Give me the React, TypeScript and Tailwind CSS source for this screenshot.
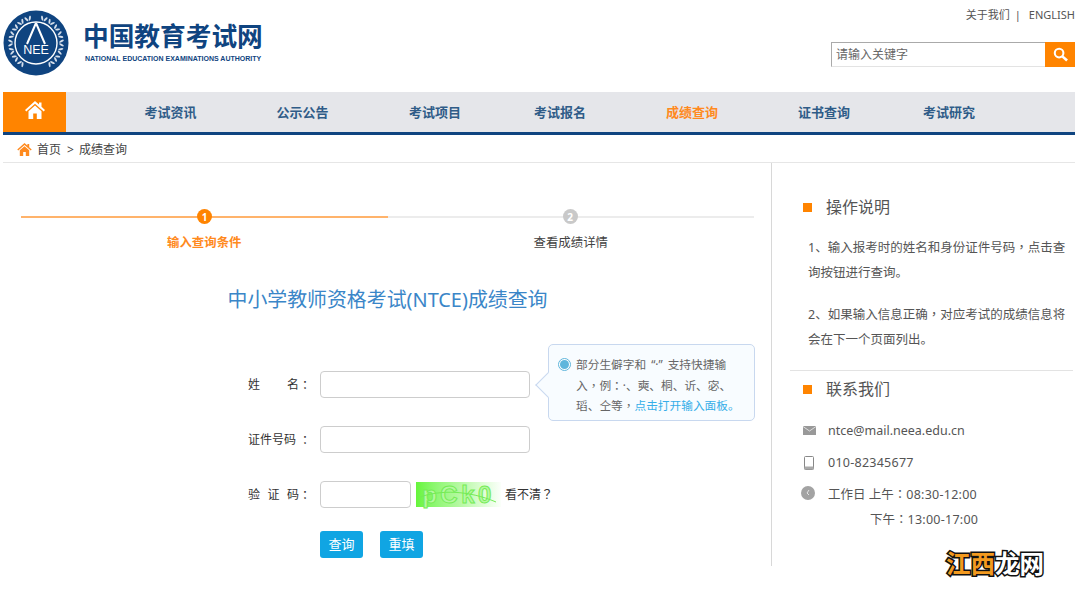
const cjk = "font-['Noto_Sans','Noto_Sans_CJK_SC',sans-serif]";

const navItems = [
  { label: "考试资讯", w: "w-[131px]" },
  { label: "公示公告", w: "w-[133px]" },
  { label: "考试项目", w: "w-[132px]" },
  { label: "考试报名", w: "w-[118px]" },
  { label: "成绩查询", w: "w-[146px]", active: true },
  { label: "证书查询", w: "w-[118px]" },
  { label: "考试研究", w: "w-[132px]" },
];

// 全角标点居中显示
const P = ({ children }: { children: string }) => (
  <span className="font-['Noto_Sans_CJK_TC',sans-serif] leading-[0]">{children}</span>
);

const HomeIcon = ({ className }: { className: string }) => (
  <svg viewBox="0 0 20 18" className={className} fill="currentColor">
    <path d="M10 0 L14 3.6 V1.5 H16.5 V5.8 L20 9 L18.7 10.4 L10 2.8 L1.3 10.4 L0 9 Z" />
    <path d="M3.5 10.2 L10 4.5 L16.5 10.2 V18 H11.8 V12.5 H8.2 V18 H3.5 Z" />
  </svg>
);

const leafAngles = [18, 36, 54, 72, 90, 108, 126, 144];

const Emblem = () => (
  <svg viewBox="0 0 66 66" className="h-[66px] w-[66px] shrink-0">
    <circle cx="33" cy="33" r="32.5" fill="#0f4480" />
    <circle cx="33" cy="33" r="21" fill="none" stroke="#fff" strokeWidth="1.4" />
    <path d="M33 13 L42 34 M33 13 L24 34" fill="none" stroke="#fff" strokeWidth="2" />
    <text x="33" y="44" textAnchor="middle" fontFamily="Liberation Sans" fontSize="12.5" fill="#fff">
      NEE
    </text>
    {[1, -1].map((side) =>
      leafAngles.map((a) => (
        <g key={`${side}-${a}`} transform={`rotate(${side * a} 33 33)`}>
          <ellipse cx={33 - 1.8 * side} cy="7.5" rx="1" ry="2.6" fill="#d5deea" transform={`rotate(${side * -28} ${33 - 1.8 * side} 7.5)`} />
          <ellipse cx={33 + 1.8 * side} cy="7.5" rx="1" ry="2.6" fill="#d5deea" transform={`rotate(${side * 28} ${33 + 1.8 * side} 7.5)`} />
        </g>
      )),
    )}
  </svg>
);

const SectionTitle = ({ children }: { children: string }) => (
  <div className="flex items-center">
    <span className="h-[9px] w-[9px] bg-[#ff8400]" />
    <span className="ml-[14px] text-[16px] leading-[24px] text-[#555]">{children}</span>
  </div>
);

const Step = ({ n, label, active }: { n: number; label: string; active?: boolean }) => (
  <div className="relative w-[366.5px]">
    <div className={active ? "h-[2px] bg-[#ffb36b]" : "h-[2px] bg-[#ececec]"} />
    <div
      className={`absolute top-[-7px] flex h-[15px] w-[15px] items-center justify-center rounded-full text-[10px] font-bold leading-none text-white ${
        active ? "left-[176px] bg-[#ff8400]" : "left-[175px] bg-[#c9c9c9]"
      }`}
    >
      {n}
    </div>
    <div
      className={`mt-[16px] text-center text-[12.4px] leading-[18px] ${
        active ? "font-bold text-[#ff8a1e]" : "text-[#444]"
      }`}
    >
      {label}
    </div>
  </div>
);

const Field = ({ label, wide = true }: { label: string; wide?: boolean }) => (
  <div className={`h-[27px] rounded-[4px] border-[1.5px] border-[#cdcdcd] bg-white ${wide ? "w-[210px]" : "w-[91px]"}`} aria-label={label} />
);

const Label = ({ parts, gap }: { parts: string[]; gap: string }) => (
  <div className={`ml-[227px] flex w-[72px] ${gap}`}>
    {parts.map((p) => (
      <span key={p}>{p}</span>
    ))}
  </div>
);

export default function App() {
  return (
    <div className={`relative h-[594px] w-[1080px] overflow-hidden bg-white px-[3px] ${cjk}`}>
      {/* header */}
      <div className="flex h-[92px] w-[1072px]">
        <div className="flex pt-[10px]">
          <Emblem />
          <div className="ml-[15px] pt-[11px]">
            <div className="ml-[-1px] text-[25.7px] font-bold leading-[32px] text-[#0f4480]">中国教育考试网</div>
            <div className="ml-[1px] mt-[1px] whitespace-nowrap font-['Liberation_Sans',sans-serif] text-[7px] font-bold leading-[9px] text-[#0f4480]">
              NATIONAL EDUCATION EXAMINATIONS AUTHORITY
            </div>
          </div>
        </div>
        <div className="ml-auto flex flex-col items-end">
          <div className="mt-[7px] flex items-center text-[11px] leading-[16px] text-[#555]">
            <span>关于我们</span>
            <span className="ml-[5px]">|</span>
            <span className="ml-[8px]">ENGLISH</span>
          </div>
          <div className="mt-[19px] flex h-[25px] w-[244px]">
            <div className="flex-1 border border-b-[#e3e3e3] border-l-[#aaa] border-r-0 border-t-[#aaa] pl-[4px] text-[12px] leading-[23px] text-[#666]">
              请输入关键字
            </div>
            <div className="flex w-[30px] items-center justify-center bg-[#ff8400]">
              <svg viewBox="0 0 16 16" className="h-[15px] w-[15px]" fill="none" stroke="#fff">
                <circle cx="6.5" cy="6.5" r="4.6" strokeWidth="2.2" />
                <path d="M10 10 L15 14.5" strokeWidth="2.8" />
              </svg>
            </div>
          </div>
        </div>
      </div>

      {/* nav */}
      <div className="flex h-[43px] w-[1072px] border-b-[3px] border-[#0f4480] bg-[#e5e6ea]">
        <div className="flex h-[40px] w-[63px] items-start justify-center bg-[#ff8400] pt-[9px] text-white">
          <HomeIcon className="h-[18px] w-[20px]" />
        </div>
        <div className="flex pl-[39px]">
          {navItems.map((item) => (
            <div
              key={item.label}
              className={`pt-[10px] text-center text-[13px] font-bold leading-[20px] ${item.w} ${
                item.active ? "text-[#ff8a1e]" : "text-[#2f5c88]"
              }`}
            >
              {item.label}
            </div>
          ))}
        </div>
      </div>

      {/* breadcrumb */}
      <div className="flex h-[28px] w-[1072px] items-center border-b border-[#e6e6e6] pl-[14px] pt-[2px] text-[12px] text-[#444]">
        <HomeIcon className="h-[13px] w-[15px] text-[#ff8a1e]" />
        <span className="ml-[5px]">首页</span>
        <span className="ml-[6px]">&gt;</span>
        <span className="ml-[5px]">成绩查询</span>
      </div>

      {/* main */}
      <div className="flex w-[1072px]">
        <div className="relative h-[403px] w-[769px] border-r border-[#d8d8d8] pl-[18px]">
          <div className="flex pt-[53px]">
            <Step n={1} label="输入查询条件" active />
            <Step n={2} label="查看成绩详情" />
          </div>
          <div className="mt-[33px] w-[733px] text-center text-[19.9px] leading-[30px] text-[#3a86c8]">
            中小学教师资格考试(NTCE)成绩查询
          </div>

          <div className="mt-[56px] flex flex-col gap-[28px] text-[12px] text-[#333]">
            <div className="flex items-center">
              <Label parts={["姓", "名"]} gap="gap-[27px]" />
              <span className="absolute left-[296px] font-['Noto_Sans_CJK_TC',sans-serif]">：</span>
              <Field label="姓名" />
            </div>
            <div className="flex items-center">
              <Label parts={["证件号码"]} gap="gap-0" />
              <span className="absolute left-[296px] font-['Noto_Sans_CJK_TC',sans-serif]">：</span>
              <Field label="证件号码" />
            </div>
            <div className="flex items-center">
              <Label parts={["验", "证", "码"]} gap="gap-[7.5px]" />
              <span className="absolute left-[296px] font-['Noto_Sans_CJK_TC',sans-serif]">：</span>
              <Field label="验证码" wide={false} />
              <div className="relative ml-[5px] flex h-[25px] w-[85px] items-center justify-center bg-gradient-to-r from-[#66f53a] via-[#b4f8a0] to-[#fbfffa] font-['Liberation_Sans',sans-serif] text-[24px] font-bold leading-none tracking-[3.5px] text-[#b4f8a0] [-webkit-text-stroke:1px_#74ec55]">
                pCk0
                <svg viewBox="0 0 85 25" className="absolute inset-0 h-[25px] w-[85px]" fill="none" stroke="#74ec55" strokeWidth="1">
                  <path d="M4 15 C24 8 52 8 80 20" />
                </svg>
              </div>
              <span className="ml-[4px]">看不清<P>？</P></span>
            </div>
          </div>

          <div className="ml-[299px] mt-[23px] flex gap-[17px]">
            <div className="flex h-[27px] w-[43px] items-center justify-center rounded-[3px] bg-[#10a5e3] text-[13px] text-white">查询</div>
            <div className="flex h-[27px] w-[43px] items-center justify-center rounded-[3px] bg-[#10a5e3] text-[13px] text-white">重填</div>
          </div>

          {/* input tip */}
          <div className="absolute left-[545px] top-[181px] h-[77px] w-[207px] rounded-[5px] border border-[#c8d8ef] bg-[#f8fcff] pl-[27px] pt-[9px] text-[11.7px] leading-[20.5px] text-[#666]">
            <span className="absolute left-[-10px] top-[31px] h-[18px] w-[18px] rotate-45 border-b border-l border-[#c8d8ef] bg-[#f8fcff]" />
            <span className="absolute left-[9px] top-[13px] flex h-[13px] w-[13px] items-center justify-center rounded-full border border-[#5fb6dc] bg-white">
              <span className="h-[9px] w-[9px] rounded-full bg-[#5fb6dc]" />
            </span>
            <div className="relative whitespace-nowrap">部分生僻字和<span className="mx-[5px]">“·”</span>支持快捷输</div>
            <div className="relative whitespace-nowrap">入<P>，</P>例<P>：</P>·、奭、桐、䜣、宓、</div>
            <div className="relative whitespace-nowrap">瑫、仝等<P>，</P><span className="text-[#35aee8]">点击打开输入面板。</span></div>
          </div>
        </div>

        {/* side panel */}
        <div className="flex-1 pt-[32px]">
          <div className="pl-[31px]">
            <SectionTitle>操作说明</SectionTitle>
          </div>
          <div className="mt-[16px] pl-[36px] pr-[4px] text-[12.5px] leading-[25px] text-[#555]">
            <p>1、输入报考时的姓名和身份证件号码<P>，</P>点击查询按钮进行查询。</p>
            <p className="mt-[17px]">2、如果输入信息正确<P>，</P>对应考试的成绩信息将会在下一个页面列出。</p>
          </div>
          <div className="ml-[18px] mt-[18px] w-[283px] border-t border-[#e3e3e3] pl-[13px] pt-[6px]">
            <SectionTitle>联系我们</SectionTitle>
          </div>
          <div className="mt-[17px] pl-[31px] text-[12.5px] leading-[25px] text-[#555]">
            <div className="flex items-center">
              <svg viewBox="0 0 13 9" className="h-[9px] w-[13px]">
                <rect width="13" height="9" fill="#999" />
                <path d="M0 0.5 L6.5 5 L13 0.5" fill="none" stroke="#ddd" />
              </svg>
              <span className="ml-[12px]">ntce@mail.neea.edu.cn</span>
            </div>
            <div className="mt-[7px] flex items-center">
              <svg viewBox="0 0 10 14" className="ml-[1px] h-[14px] w-[10px]">
                <rect x="0.5" y="0.5" width="9" height="13" rx="1" fill="#fff" stroke="#888" />
                <rect x="0.5" y="10.5" width="9" height="3" fill="#aaa" />
              </svg>
              <span className="ml-[14px] tracking-[0.25px]">010-82345677</span>
            </div>
            <div className="mt-[7px] flex items-center">
              <svg viewBox="0 0 14 14" className="ml-[-2px] mt-[-4px] h-[14px] w-[14px]">
                <circle cx="7" cy="7" r="7" fill="#a3a3a3" />
                <path d="M8 4 L6 7 L8 9" fill="none" stroke="#e5e5e5" />
              </svg>
              <span className="ml-[13px]">工作日 上午<P>：</P><span className="tracking-[0.25px]">08:30-12:00</span></span>
            </div>
            <div className="pl-[67px]">下午<P>：</P><span className="tracking-[0.25px]">13:00-17:00</span></div>
          </div>
        </div>
      </div>

      {/* watermark */}
      <div className="absolute left-[946px] top-[549px] text-[24.5px] font-bold leading-[30px] [-webkit-text-stroke:3px_#111] [paint-order:stroke_fill]">
        <span className="text-[#f39a1f]">江西</span>
        <span className="text-white">龙网</span>
      </div>
    </div>
  );
}
